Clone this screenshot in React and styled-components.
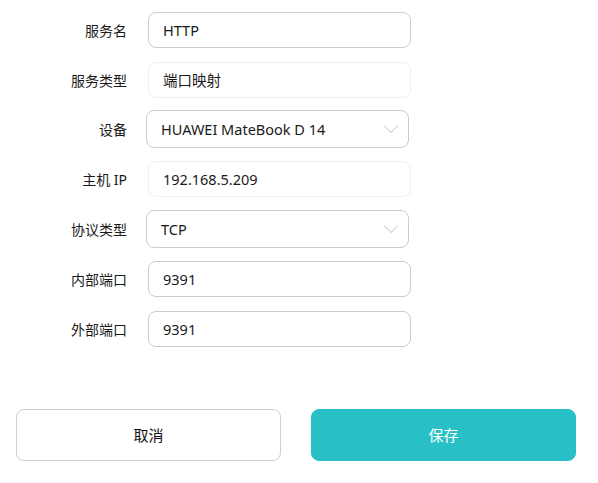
import React, { useState } from "react";
import styled, { createGlobalStyle } from "styled-components";

const GlobalStyle = createGlobalStyle`
  html, body {
    margin: 0;
    padding: 0;
    background: #ffffff;
  }
  body {
    font-family: "Noto Sans", "Noto Sans CJK SC", sans-serif;
    color: #1a1a1a;
  }
`;

const Page = styled.div`
  width: 598px;
  height: 483px;
  box-sizing: border-box;
  padding-top: 5px;
  display: flex;
  flex-direction: column;
`;

const Form = styled.div`
  display: flex;
  flex-direction: column;
`;

const Row = styled.div`
  display: grid;
  grid-template-columns: 127px 1fr;
  column-gap: 21px;
  align-items: center;
  height: 49.8px;
  width: 411px;
`;

const Label = styled.div`
  text-align: right;
  font-size: 14px;
  font-family: "Noto Sans", "Noto Sans CJK SC", sans-serif;
  color: #1a1a1a;
`;

const Field = styled.input`
  box-sizing: border-box;
  width: 263px;
  height: 36px;
  padding: 0 14px;
  border: 1px solid ${(p) => (p.readOnly ? "#efefef" : "#cccccc")};
  border-radius: 8px;
  font-size: 14.5px;
  font-family: "Noto Sans", "Noto Sans CJK SC", sans-serif;
  color: #1a1a1a;
  background: #fff;
  outline: none;
`;

const SelectBox = styled.div`
  box-sizing: border-box;
  width: 263px;
  height: 38px;
  margin-left: -2px;
  padding: 0 9px 0 14px;
  border: 1px solid #cccccc;
  border-radius: 8px;
  display: flex;
  align-items: center;
  justify-content: space-between;
  font-size: 14.5px;
  color: #1a1a1a;
  cursor: pointer;
`;

const Actions = styled.div`
  margin-top: 55px;
  padding: 0 22px 0 16px;
  display: flex;
  gap: 30px;
`;

const Button = styled.button`
  flex: 1;
  height: 52px;
  border-radius: 8px;
  font-size: 15px;
  font-family: "Noto Sans CJK SC", "Noto Sans", sans-serif;
  cursor: pointer;
  border: 1px solid ${(p) => (p.$primary ? "#29bfc6" : "#cfcfcf")};
  background: ${(p) => (p.$primary ? "#29bfc6" : "#ffffff")};
  color: ${(p) => (p.$primary ? "#ffffff" : "#111111")};
`;

const Chevron = () => (
  <svg width="16" height="10" viewBox="0 0 16 10" fill="none">
    <path d="M1 1.5 L8 8.5 L15 1.5" stroke="#bdbdbd" strokeWidth="1" />
  </svg>
);

const Select = ({ value }) => (
  <SelectBox>
    <span>{value}</span>
    <Chevron />
  </SelectBox>
);

export default function App() {
  const [name, setName] = useState("HTTP");
  const [inPort, setInPort] = useState("9391");
  const [outPort, setOutPort] = useState("9391");

  return (
    <Page>
      <GlobalStyle />
      <Form>
        <Row>
          <Label>服务名</Label>
          <Field value={name} onChange={(e) => setName(e.target.value)} />
        </Row>
        <Row>
          <Label>服务类型</Label>
          <Field value="端口映射" readOnly />
        </Row>
        <Row>
          <Label>设备</Label>
          <Select value="HUAWEI MateBook D 14" />
        </Row>
        <Row>
          <Label>主机 IP</Label>
          <Field value="192.168.5.209" readOnly />
        </Row>
        <Row>
          <Label>协议类型</Label>
          <Select value="TCP" />
        </Row>
        <Row>
          <Label>内部端口</Label>
          <Field value={inPort} onChange={(e) => setInPort(e.target.value)} />
        </Row>
        <Row>
          <Label>外部端口</Label>
          <Field value={outPort} onChange={(e) => setOutPort(e.target.value)} />
        </Row>
      </Form>
      <Actions>
        <Button>取消</Button>
        <Button $primary>保存</Button>
      </Actions>
    </Page>
  );
}
